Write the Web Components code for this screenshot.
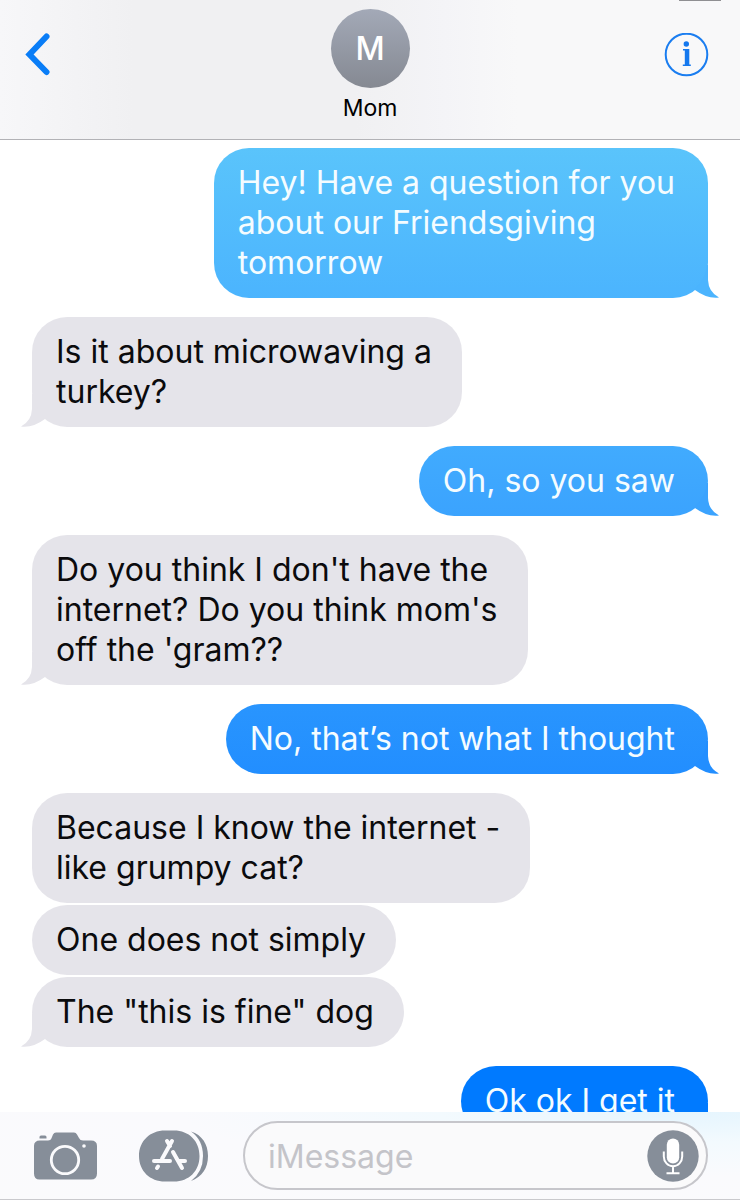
<!DOCTYPE html>
<html lang="en">
<head>
<meta charset="utf-8">
<meta name="viewport" content="width=device-width, initial-scale=1">
<title>Mom</title>
<style>
html,body{margin:0;height:100%;background:#fff;font-family:Inter,"Liberation Sans",sans-serif}
</style>
</head>
<body>
<chat-app>
  <chat-header slot="header" name="Mom" initial="M"></chat-header>
  <chat-bubble side="out" tail style="--top:#5ac4fb;--bottom:#4bb4fe">Hey! Have a question for you<br>about our Friendsgiving<br>tomorrow</chat-bubble>
  <chat-bubble side="in" tail>Is it about microwaving a<br>turkey?</chat-bubble>
  <chat-bubble side="out" tail style="--top:#41abfe;--bottom:#3ba3fe">Oh, so you saw</chat-bubble>
  <chat-bubble side="in" tail>Do you think I don't have the<br>internet? Do you think mom's<br>off the 'gram??</chat-bubble>
  <chat-bubble side="out" tail style="--top:#2995fe;--bottom:#228eff">No, that’s not what I thought</chat-bubble>
  <chat-bubble side="in" grouped>Because I know the internet -<br>like grumpy cat?</chat-bubble>
  <chat-bubble side="in" grouped>One does not simply</chat-bubble>
  <chat-bubble side="in" tail>The "this is fine" dog</chat-bubble>
  <chat-bubble side="out" tail style="--top:#007aff;--bottom:#007aff">Ok ok I get it</chat-bubble>
  <chat-composer slot="footer"></chat-composer>
</chat-app>

<template id="app-template">
  <style>
    :host{display:flex;flex-direction:column;height:100vh;overflow:hidden}
    main{flex:1;min-height:0;overflow:hidden;display:flex;flex-direction:column;padding:8px 32px 0}
  </style>
  <slot name="header"></slot>
  <main><slot></slot></main>
  <slot name="footer"></slot>
</template>

<template id="header-template">
  <style>
    :host{display:block;flex:none;position:relative;border-bottom:1px solid #b2b2b6;
      background:linear-gradient(90deg,#f7f7f9 0,#f0f0f2 18%,#f0f0f2 48%,#f4f4f7 60%,#f8f8f9 70%)}
    header{display:grid;grid-template-columns:1fr auto 1fr;box-sizing:border-box;height:139px;padding:9px 30px 0 16px}
    button{border:0;background:none;padding:0;height:44px;margin-top:24px;cursor:pointer;justify-self:start}
    svg{display:block}
    .info{justify-self:end}
    .person{display:flex;flex-direction:column;align-items:center;gap:4px;margin-right:-14px;grid-column:2}
    .avatar{width:79px;height:79px;border-radius:50%;display:grid;place-items:center;color:#fff;
      font-size:32px;font-weight:500;background:linear-gradient(#a3a9b7,#858992)}
    h1{margin:0;font-size:23px;line-height:32px;font-weight:400;color:#000}
    .status{position:absolute;top:0;right:19px;width:42px;height:1px;background:#8f8f92}
  </style>
  <span class="status"></span>
  <header>
    <button aria-label="Back"><svg width="44" height="44" viewBox="0 0 44 44" fill="none" stroke="#097df7" stroke-width="6" stroke-linecap="round" stroke-linejoin="miter"><path d="M30.500 3.500 13.500 21.500 30.500 39"/></svg></button>
    <div class="person"><div class="avatar"></div><h1></h1></div>
    <button class="info" aria-label="Info"><svg width="46" height="44" viewBox="0 0 46 44"><circle cx="22.500" cy="21.500" r="20.800" fill="none" stroke="#1a7df0" stroke-width="2"/><circle cx="22.300" cy="11" r="2.700" fill="#1478ee"/><path d="M19 16h6.300v15.600h1.500V33h-8v-1.400h2V17.500H19z" fill="#1478ee"/></svg></button>
  </header>
</template>

<template id="bubble-template">
  <style>
    :host{display:block;flex:none;position:relative;box-sizing:border-box;max-width:80%;
      padding:15px 33px 15px 24px;border-radius:35px;margin-bottom:19px;
      font-size:32px;line-height:40px;white-space:nowrap;
      background:linear-gradient(var(--top),var(--bottom))}
    :host([side=in]){--top:#e5e4ea;--bottom:#e5e4ea;color:#0b0b0d;align-self:flex-start;padding-right:30px}
    :host([side=out]){color:#f4fcff;align-self:flex-end}
    :host([grouped]){margin-bottom:2px}
    svg{display:none;position:absolute;bottom:0;right:-12px;fill:var(--bottom)}
    :host([tail]) svg{display:block}
    :host([side=in]) svg{right:auto;left:-12px;transform:scaleX(-1)}
  </style>
  <slot></slot>
  <svg width="40" height="40" viewBox="0 0 40 40" aria-hidden="true"><path d="M28 7V22Q28.500 34 39 39.500Q27 41 15 32L14 31A35 35 0 0 0 27 7Z"/></svg>
</template>

<template id="composer-template">
  <style>
    :host{display:block;flex:none;border-bottom:1px solid #c9c9cd;
      background:radial-gradient(ellipse at 92% 0,#e5f5fe 0,#f3fafe 25%,#fafafd 52%,#fafafc 100%)}
    form{display:flex;align-items:center;box-sizing:border-box;height:87px;padding:0 32px 0 33px}
    button{border:0;padding:0;background:none;flex:none;cursor:pointer}
    svg{display:block}
    .apps{margin:0 35px 0 42px}
    .field{flex:1;min-width:0;display:flex;align-items:center;box-sizing:border-box;height:69px;
      padding:0 7px 0 23px;border:2px solid #c6c6cb;border-radius:35px;background:#fafafb}
    input{flex:1;min-width:0;border:0;padding:2px 0 0;background:none;outline:0;font:400 32px/40px Inter,"Liberation Sans",sans-serif;color:#000}
    input::placeholder{color:#c4c4c9;opacity:1}
  </style>
  <form>
    <button type="button" aria-label="Camera"><svg width="64" height="52" viewBox="0 2 64 52"><path fill="#868e99" d="M7 12.500H15Q18 12.500 19 9L20 6.500Q21 4.500 23 4.500H41Q43 4.500 44 6.500L46 10Q47 12.500 50 12.500H58Q64 12.500 64 18V45.500Q64 51.500 58 51.500H6.500Q1 51.500 1 45.500V18Q1 12.500 7 12.500ZM8 7.500H12Q13.500 7.500 13.500 9V10.500H6.500V9Q6.500 7.500 8 7.500Z"/><circle cx="32" cy="32" r="13.700" fill="none" stroke="#fafafc" stroke-width="2.800"/><circle cx="51" cy="18" r="1.800" fill="#fafafc"/></svg></button>
    <button class="apps" type="button" aria-label="Apps"><svg width="69" height="52" viewBox="0 0 69 52"><path fill="#868e99" d="M26 0.500H35C50 0.500 60.500 11 60.500 26S50 51.500 35 51.500H26C11 51.500 0 41 0 26S11 0.500 26 0.500ZM52 1.500C63 5 69 14 69 26S63 47 52 51Q64 42 64 26T52 1.500Z"/><g fill="none" stroke="#fafafc" stroke-width="4" stroke-linecap="round"><path d="M33 11 23 29M28 11 31 16M34 22 43 38M15 31H31M39 31H46M19 36.500 18 38"/></g></svg></button>
    <div class="field">
      <input type="text" placeholder="iMessage" aria-label="iMessage">
      <button type="button" aria-label="Record audio"><svg width="52" height="52" viewBox="0 0 52 52"><circle cx="26" cy="26" r="25.700" fill="#868e99"/><rect x="19.800" y="8.500" width="12.400" height="25" rx="6.200" fill="#fff"/><path d="M16.800 21.500V26.500A9.200 9.700 0 0 0 35.200 26.500V21.500M26 36.500V43M19.500 43.200H32.500" fill="none" stroke="#fff" stroke-width="2"/></svg></button>
    </div>
  </form>
</template>

<script>
class TemplateElement extends HTMLElement {
  constructor() {
    super();
    const template = document.getElementById(this.constructor.template);
    this.attachShadow({ mode: 'open' }).append(template.content.cloneNode(true));
  }
}
class ChatApp extends TemplateElement { static template = 'app-template'; }
class ChatHeader extends TemplateElement {
  static template = 'header-template';
  connectedCallback() {
    this.shadowRoot.querySelector('h1').textContent = this.getAttribute('name');
    this.shadowRoot.querySelector('.avatar').textContent = this.getAttribute('initial');
  }
}
class ChatBubble extends TemplateElement { static template = 'bubble-template'; }
class ChatComposer extends TemplateElement { static template = 'composer-template'; }
customElements.define('chat-app', ChatApp);
customElements.define('chat-header', ChatHeader);
customElements.define('chat-bubble', ChatBubble);
customElements.define('chat-composer', ChatComposer);
</script>
</body>
</html>
